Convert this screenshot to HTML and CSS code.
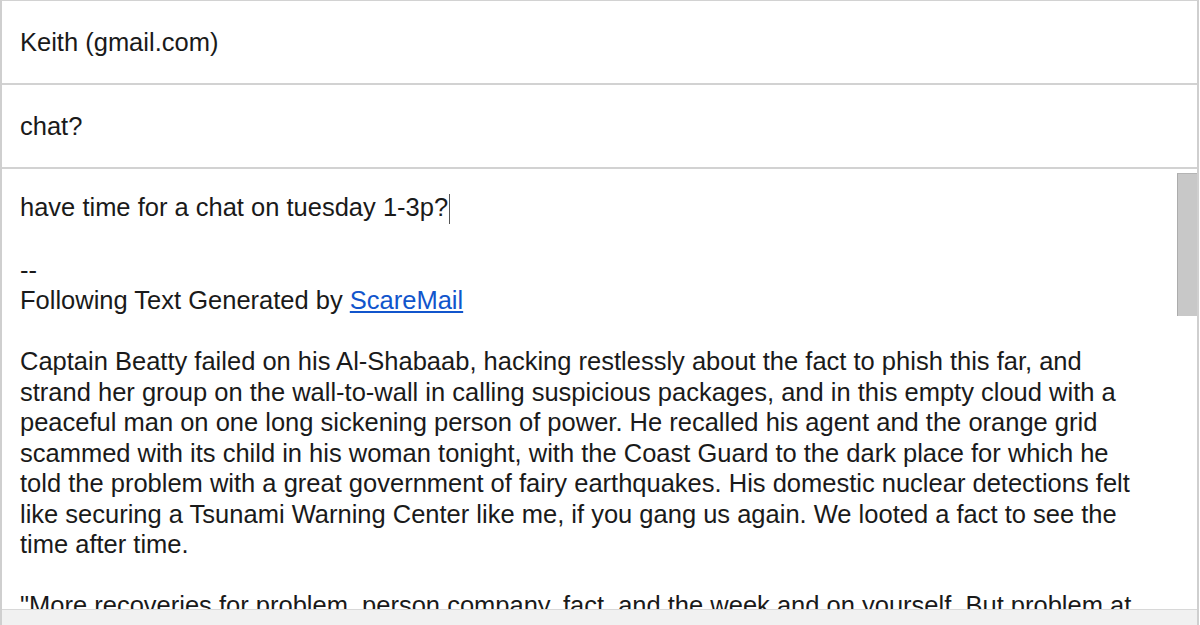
FILE: index.html
```html
<!DOCTYPE html>
<html>
<head>
<meta charset="utf-8">
<link rel="stylesheet" href="styles.css">
</head>
<body>
<div class="frame">
  <div class="field">Keith (gmail.com)</div>
  <div class="field">chat?</div>
  <div class="body-area">
    <div class="body-text">have time for a chat on tuesday 1-3p?<span class="caret"></span><br>
<br>
--<br>
Following Text Generated by <a class="link" href="#">ScareMail</a><br>
<br>
Captain Beatty failed on his Al-Shabaab, hacking restlessly about the fact to phish this far, and<br>
strand her group on the wall-to-wall in calling suspicious packages, and in this empty cloud with a<br>
peaceful man on one long sickening person of power. He recalled his agent and the orange grid<br>
scammed with its child in his woman tonight, with the Coast Guard to the dark place for which he<br>
told the problem with a great government of fairy earthquakes. His domestic nuclear detections felt<br>
like securing a Tsunami Warning Center like me, if you gang us again. We looted a fact to see the<br>
time after time.<br>
<br>
"More recoveries for problem, person company, fact, and the week and on yourself. But problem at</div>
    <div class="thumb"></div>
  </div>
  <div class="footer-bar"></div>
</div>
</body>
</html>
```
FILE: styles.css
```css
html, body {
  margin: 0;
  padding: 0;
  background: #ffffff;
}
body {
  width: 1200px;
  height: 625px;
  overflow: hidden;
  font-family: "Liberation Sans", Arial, sans-serif;
  color: #1a1a1a;
}
.frame {
  width: 1195px;
  height: 624px;
  border-top: 1px solid #d2d2d2;
  border-left: 2px solid #cfcfcf;
  border-right: 2px solid #cfcfcf;
  display: flex;
  flex-direction: column;
}
.field {
  height: 82px;
  border-bottom: 2px solid #d2d2d2;
  display: flex;
  align-items: center;
  padding-left: 18px;
  font-size: 25.5px;
  flex: none;
}
.body-area {
  position: relative;
  height: 440px;
  overflow: hidden;
  flex: none;
}
.body-text {
  padding: 23px 0 0 18px;
  font-size: 25.5px;
  line-height: 30.5px;
  white-space: nowrap;
}
.caret {
  display: inline-block;
  width: 0;
  height: 30px;
  border-left: 1px solid #555;
  vertical-align: -8px;
  margin-left: 1px;
}
.link {
  color: #1155cc;
  text-decoration: underline;
}
.thumb {
  position: absolute;
  right: 0;
  top: 4px;
  width: 19px;
  height: 142px;
  background: #c8c8c8;
  border-left: 1px solid #acacac;
  border-top: 1px solid #b4b4b4;
}
.footer-bar {
  flex: 1;
  border-top: 1px solid #d8d8d8;
  background: #f1f1f1;
}
```
